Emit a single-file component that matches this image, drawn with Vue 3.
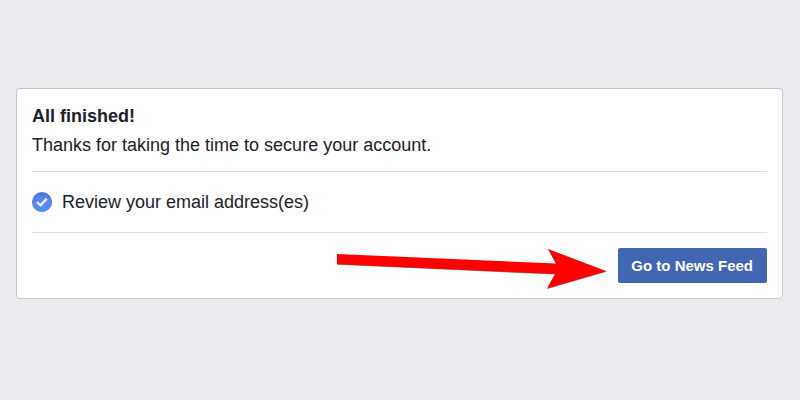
<script setup>
const title = 'All finished!'
const message = 'Thanks for taking the time to secure your account.'
const steps = ['Review your email address(es)']
</script>

<template>
  <main class="page">
    <section class="card">
      <header class="intro">
        <h1>{{ title }}</h1>
        <p>{{ message }}</p>
      </header>
      <ul class="steps">
        <li v-for="step in steps" :key="step">
          <svg class="check" viewBox="0 0 20 20" aria-hidden="true">
            <defs>
              <linearGradient id="disc" x1="0" y1="0" x2="0" y2="1">
                <stop offset="0" stop-color="#4273d6" />
                <stop offset="0.3" stop-color="#5585f3" />
                <stop offset="1" stop-color="#5a8cfc" />
              </linearGradient>
            </defs>
            <circle cx="10" cy="10" r="10" fill="#4475d8" />
            <circle cx="10" cy="10.4" r="9.5" fill="url(#disc)" />
            <path d="M5 10.1 8.6 13.3 14.8 6.7" fill="none" stroke="#e6edff" stroke-width="2.6" />
          </svg>
          <span>{{ step }}</span>
        </li>
      </ul>
      <footer class="actions">
        <svg class="arrow" viewBox="0 0 274 44" aria-hidden="true">
          <path d="M1.2 8 220.3 17.2 212.3 2.6 270.5 24.7 211.3 42 219.3 27.5 1.2 17.8Z" fill="#888" />
          <path d="M1 7 220 16.6 212 2 270.5 24.2 211 41.5 219 27 1 17.3Z" fill="#f00" />
        </svg>
        <button type="button">Go to News Feed</button>
      </footer>
    </section>
  </main>
</template>

<style>
body {
  background: #e9ebee;
}
</style>

<style scoped>
.page {
  padding: 88px 17px 88px 16px;
  font-family: "Liberation Sans", Arial, sans-serif;
  color: #1d2129;
}
.card {
  padding: 13px 15px 15px;
  background: #fff;
  border: 1px solid #c6c8cc;
  border-radius: 4px;
}
.intro {
  padding-bottom: 11px;
  border-bottom: 1px solid #dddfe2;
}
h1,
p {
  margin: 0;
  font-size: 18px;
  line-height: 29px;
}
.steps {
  margin: 0;
  padding: 0;
  list-style: none;
}
.steps li {
  display: flex;
  align-items: center;
  gap: 10px;
  min-height: 60px;
  border-bottom: 1px solid #dddfe2;
  font-size: 18px;
}
.check {
  width: 20px;
  height: 20px;
}
.actions {
  position: relative;
  display: flex;
  justify-content: flex-end;
  padding-top: 15px;
}
.arrow {
  position: absolute;
  top: 14px;
  right: 157px;
  width: 274px;
  height: 44px;
  pointer-events: none;
}
button {
  height: 35px;
  padding: 0 14px 0 13px;
  border: 0;
  border-radius: 2px;
  background: #4267b2;
  color: #fff;
  font: bold 15px "Liberation Sans", Arial, sans-serif;
  cursor: pointer;
}
</style>
